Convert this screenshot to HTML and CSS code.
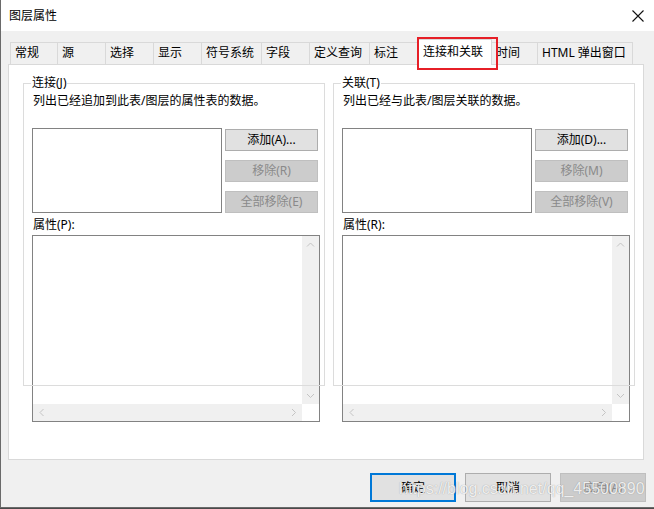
FILE: index.html
```html
<!DOCTYPE html>
<html lang="zh-CN">
<head>
<meta charset="utf-8">
<title>图层属性</title>
<link rel="stylesheet" href="styles.css">
</head>
<body>
<div class="window">
  <div class="titlebar">
    <span class="title">图层属性</span>
    <svg class="close" width="12" height="12" viewBox="0 0 12 12"><path d="M0.5 0.5 L11.5 11.5 M11.5 0.5 L0.5 11.5" stroke="#111" stroke-width="1.1" fill="none"/></svg>
  </div>
  <div class="tabs">
    <div class="tab w47">常规</div>
    <div class="tab w48">源</div>
    <div class="tab w48">选择</div>
    <div class="tab w48">显示</div>
    <div class="tab w60">符号系统</div>
    <div class="tab w48">字段</div>
    <div class="tab w60">定义查询</div>
    <div class="tab w48">标注</div>
    <div class="tab sel">连接和关联</div>
    <div class="tab w45 after-sel">时间</div>
    <div class="tab w96 last">HTML 弹出窗口</div>
  </div>
  <div class="panel">
    <div class="group">
      <div class="legend">连接(J)</div>
      <div class="desc">列出已经追加到此表/图层的属性表的数据。</div>
      <div class="row">
        <div class="listbox small"></div>
        <div class="btns">
          <div class="btn">添加(A)...</div>
          <div class="btn dis">移除(R)</div>
          <div class="btn dis">全部移除(E)</div>
        </div>
      </div>
      <div class="lbl">属性(P):</div>
      <div class="listbox big">
        <div class="lb-content"></div>
        <div class="vscroll">
          <svg width="17" height="17" viewBox="0 0 17 17"><path d="M5 10.5 L8.5 7 L12 10.5" stroke="#c4c4c4" fill="none"/></svg>
          <svg width="17" height="17" viewBox="0 0 17 17"><path d="M5 7 L8.5 10.5 L12 7" stroke="#c4c4c4" fill="none"/></svg>
        </div>
        <div class="hscroll">
          <svg width="17" height="17" viewBox="0 0 17 17"><path d="M10.5 5 L7 8.5 L10.5 12" stroke="#c4c4c4" fill="none"/></svg>
          <svg width="17" height="17" viewBox="0 0 17 17"><path d="M7 5 L10.5 8.5 L7 12" stroke="#c4c4c4" fill="none"/></svg>
        </div>
        <div class="corner"></div>
      </div>
    </div>
    <div class="group">
      <div class="legend">关联(T)</div>
      <div class="desc">列出已经与此表/图层关联的数据。</div>
      <div class="row">
        <div class="listbox small"></div>
        <div class="btns">
          <div class="btn">添加(D)...</div>
          <div class="btn dis">移除(M)</div>
          <div class="btn dis">全部移除(V)</div>
        </div>
      </div>
      <div class="lbl">属性(R):</div>
      <div class="listbox big">
        <div class="lb-content"></div>
        <div class="vscroll">
          <svg width="17" height="17" viewBox="0 0 17 17"><path d="M5 10.5 L8.5 7 L12 10.5" stroke="#c4c4c4" fill="none"/></svg>
          <svg width="17" height="17" viewBox="0 0 17 17"><path d="M5 7 L8.5 10.5 L12 7" stroke="#c4c4c4" fill="none"/></svg>
        </div>
        <div class="hscroll">
          <svg width="17" height="17" viewBox="0 0 17 17"><path d="M10.5 5 L7 8.5 L10.5 12" stroke="#c4c4c4" fill="none"/></svg>
          <svg width="17" height="17" viewBox="0 0 17 17"><path d="M7 5 L10.5 8.5 L7 12" stroke="#c4c4c4" fill="none"/></svg>
        </div>
        <div class="corner"></div>
      </div>
    </div>
  </div>
  <div class="footer">
    <div class="fbtn default">确定</div>
    <div class="fbtn">取消</div>
    <div class="fbtn dis">应用(A)</div>
  </div>
  <div class="watermark">https://blog.csdn.net/qq_45500890</div>
</div>
</body>
</html>
```
FILE: styles.css
```css
* { box-sizing: border-box; }
html, body { margin: 0; padding: 0; }
body {
  background: #4a4a4a;
  font-family: "Noto Sans", "Noto Sans CJK SC", sans-serif;
  font-size: 12px;
  color: #000;
}
.window {
  position: relative;
  width: 654px;
  height: 508px;
  background: #f0f0f0;
  border-left: 1px solid #6a6a6a;
  border-bottom: 1px solid #6a6a6a;
  overflow: hidden;
}
.titlebar {
  height: 31px;
  background: #fff;
  display: flex;
  align-items: center;
  justify-content: space-between;
  padding: 1px 10px 0 8px;
}
.title { line-height: 16px; }
.close { display: block; }

.tabs {
  display: flex;
  align-items: flex-end;
  height: 22px;
  margin: 11px 0 0 9px;
}
.tab {
  height: 22px;
  border: 1px solid #d9d9d9;
  border-bottom: none;
  border-right: none;
  padding-left: 4px;
  line-height: 20px;
  white-space: nowrap;
  background: #f0f0f0;
}
.w45 { width: 45px; }
.w47 { width: 47px; }
.w48 { width: 48px; }
.w60 { width: 60px; }
.w96 { width: 96px; }
.tab.last { border-right: 1px solid #d9d9d9; }
.tab.after-sel { border-left: none; }
.tab.sel {
  position: relative;
  z-index: 2;
  width: 75px;
  height: 26px;
  margin-bottom: -1px;
  background: #fff;
  border-right: 1px solid #d9d9d9;
  padding: 2px 0 0 5px;
  line-height: 20px;
}
.tab.sel::after {
  content: "";
  position: absolute;
  left: -1px;
  top: -3px;
  width: 77px;
  height: 29px;
  border: 2px solid #e61f27;
}

.panel {
  margin-left: 7px;
  width: 636px;
  height: 396px;
  background: #fff;
  border: 1px solid #d9d9d9;
  display: flex;
  gap: 8px;
  padding: 18px 0 0 14px;
}
.group {
  position: relative;
  width: 302px;
  height: 303px;
  padding: 10px 0 0 9px;
}
.group::after {
  content: "";
  position: absolute;
  inset: 0;
  border: 1px solid #dcdcdc;
  pointer-events: none;
  z-index: 1;
}
.legend {
  position: absolute;
  left: 8px;
  top: -8px;
  padding: 0 1px;
  background: #fff;
  line-height: 16px;
  z-index: 2;
}
.desc {
  line-height: 16px;
  padding-left: 1px;
  white-space: nowrap;
}
.row {
  display: flex;
  gap: 3px;
  margin-top: 19px;
}
.listbox {
  border: 1px solid #828282;
  background: #fff;
}
.listbox.small {
  width: 190px;
  height: 85px;
}
.btns {
  display: flex;
  flex-direction: column;
  gap: 9px;
  padding-top: 1px;
}
.btn {
  width: 93px;
  height: 22px;
  border: 1px solid #adadad;
  background: #e1e1e1;
  text-align: center;
  line-height: 20px;
}
.btn.dis {
  background: #cccccc;
  border-color: #bfbfbf;
  color: #8a8a8a;
}
.lbl {
  margin-top: 4px;
  line-height: 16px;
  padding-left: 1px;
}
.listbox.big {
  margin-top: 2px;
  width: 288px;
  height: 187px;
  display: grid;
  grid-template-columns: 1fr 17px;
  grid-template-rows: 1fr 17px;
}
.lb-content { background: #fff; }
.vscroll {
  background: #f0f0f0;
  display: flex;
  flex-direction: column;
  justify-content: space-between;
}
.hscroll {
  background: #f0f0f0;
  display: flex;
  justify-content: space-between;
}
.vscroll svg, .hscroll svg { display: block; }
.corner { background: #fff; }

.footer {
  display: flex;
  justify-content: flex-end;
  gap: 9px;
  margin-top: 13px;
  padding-right: 8px;
}
.fbtn {
  width: 86px;
  height: 29px;
  border: 1px solid #adadad;
  background: #e1e1e1;
  text-align: center;
  line-height: 27px;
}
.fbtn.default {
  border: 2px solid #0078d7;
  line-height: 25px;
}
.fbtn.dis {
  background: #cccccc;
  border-color: #bfbfbf;
  color: #8a8a8a;
}
.watermark {
  position: absolute;
  left: 398px;
  top: 479px;
  font-family: "Liberation Sans", sans-serif;
  font-size: 16px;
  line-height: 19px;
  color: rgba(255, 255, 255, 0.85);
  text-shadow: 0 0 1px rgba(90, 90, 90, 0.6);
  white-space: nowrap;
  pointer-events: none;
  z-index: 5;
}
```
